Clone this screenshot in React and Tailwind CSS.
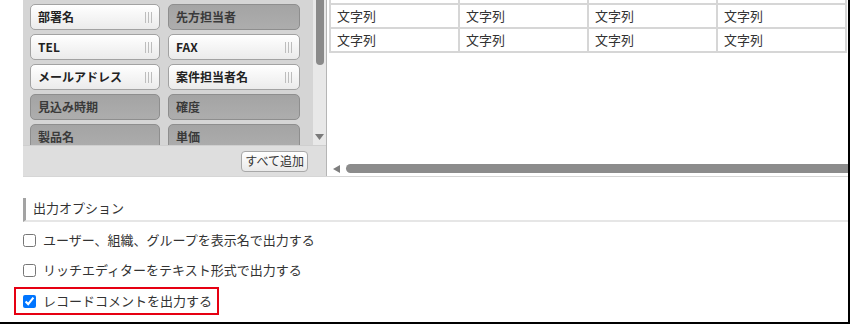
const rows = [
  [{ label: "", on: true }, { label: "", on: false }],
  [{ label: "部署名", on: true }, { label: "先方担当者", on: false }],
  [{ label: "TEL", on: true }, { label: "FAX", on: true }],
  [{ label: "メールアドレス", on: true }, { label: "案件担当者名", on: true }],
  [{ label: "見込み時期", on: false }, { label: "確度", on: false }],
  [{ label: "製品名", on: false }, { label: "単価", on: false }],
];

function Grip() {
  return (
    <svg width="7" height="11" viewBox="0 0 7 11" className="shrink-0">
      <rect x="0" y="0" width="1" height="11" fill="#bdbdbd" />
      <rect x="3" y="0" width="1" height="11" fill="#bdbdbd" />
      <rect x="6" y="0" width="1" height="11" fill="#bdbdbd" />
    </svg>
  );
}

function FieldButton({ label, on }) {
  if (on) {
    return (
      <div className="flex h-[26px] items-center justify-between rounded-[5px] border border-[#a2a2a2] bg-linear-to-b from-white to-[#ebebeb] pl-[7px] pr-[7px] text-[12px] font-bold text-[#222] shadow-[inset_0_1px_0_#fff]">
        <span>{label}</span>
        <Grip />
      </div>
    );
  }
  return (
    <div className="flex h-[26px] items-center rounded-[5px] border border-[#8e8e8e] bg-linear-to-b from-[#a4a4a4] to-[#adadad] pl-[7px] text-[12px] font-bold text-[#3a3a3a]">
      <span>{label}</span>
    </div>
  );
}

function Checkbox({ checked, label }) {
  return (
    <label className="flex items-center gap-[7px]">
      <input
        type="checkbox"
        defaultChecked={checked}
        className="m-0 h-[13px] w-[13px]"
      />
      <span className="text-[13px] leading-[16px] text-[#333]">{label}</span>
    </label>
  );
}

export default function App() {
  return (
    <div
      className="h-[324px] w-[850px] overflow-hidden border-r-2 border-b-2 border-black bg-white"
      style={{ fontFamily: '"Noto Sans CJK JP", "Noto Sans", sans-serif' }}
    >
      {/* top: field picker + preview */}
      <div className="ml-[23px] flex h-[177px] border-b border-[#d6d6d6]">
        <div className="flex w-[303px] flex-col">
          <div className="flex h-[145px]">
            <div className="h-full w-[290px] overflow-hidden bg-[#d5d5d5] pl-[7px]">
              <div className="-mt-[26px] grid grid-cols-[130px_132px] gap-x-[8px] gap-y-[4px]">
                {rows.map((r, i) =>
                  r.map((b, j) => (
                    <FieldButton key={i + "-" + j} label={b.label} on={b.on} />
                  ))
                )}
              </div>
            </div>
            <div className="flex h-full w-[13px] flex-col items-center justify-between bg-[#e8e8e8] pb-[5px]">
              <div className="h-[65px] w-[8px] rounded-b-full bg-[#8a8a8a]" />
              <svg width="9" height="6" viewBox="0 0 9 6">
                <path d="M0 0 L9 0 L4.5 6 Z" fill="#7a7a7a" />
              </svg>
            </div>
          </div>
          <div className="flex h-[31px] items-center justify-end border-t border-[#cfcfcf] bg-[#dedede] pr-[18px]">
            <button className="h-[21px] rounded-[4px] border border-[#a8a8a8] bg-linear-to-b from-white to-[#e9e9e9] px-[3px] text-[12px] leading-none text-[#333]">
              すべて追加
            </button>
          </div>
        </div>
        <div className="w-px bg-[#b5b5b5]" />
        <div className="flex flex-1 flex-col pb-[1px]">
          <div className="flex-1 overflow-hidden pl-[2px]">
            <table className="-mt-[21px] border-collapse">
              <tbody>
                {[0, 1, 2].map((r) => (
                  <tr key={r}>
                    {[0, 1, 2, 3].map((c) => (
                      <td
                        key={c}
                        className="h-[24px] w-[129px] border-2 border-[#d6d6d6] px-[6px] text-[13px] leading-[16px] text-[#333]"
                      >
                        {r === 0 ? "" : "文字列"}
                      </td>
                    ))}
                  </tr>
                ))}
              </tbody>
            </table>
          </div>
          <div className="flex h-[13px] items-center">
            <svg width="7" height="8" viewBox="0 0 7 8" className="ml-[6px]">
              <path d="M7 0 L7 8 L0 4 Z" fill="#7e7e7e" />
            </svg>
            <div className="ml-[6px] h-[9px] flex-1 rounded-l-full bg-[#8c8c8c]" />
          </div>
        </div>
      </div>

      {/* output options */}
      <div className="ml-[23px] mt-[21px] flex h-[24px] items-center border-l-[3px] border-b-2 border-l-[#a3a3a3] border-b-[#e6e6e6] pl-[7px] pb-[3px]">
        <span className="text-[13px] leading-[16px] text-[#333]">出力オプション</span>
      </div>
      <div className="mt-[3px] flex flex-col">
        <div className="flex h-[30px] items-center pl-[23px]">
          <Checkbox label="ユーザー、組織、グループを表示名で出力する" />
        </div>
        <div className="flex h-[30px] items-center pl-[23px]">
          <Checkbox label="リッチエディターをテキスト形式で出力する" />
        </div>
        <div className="ml-[14px] mt-[2px] flex h-[28px] w-[205px] items-center border-2 border-[#e60012] pl-[7px]">
          <Checkbox checked label="レコードコメントを出力する" />
        </div>
      </div>
    </div>
  );
}
